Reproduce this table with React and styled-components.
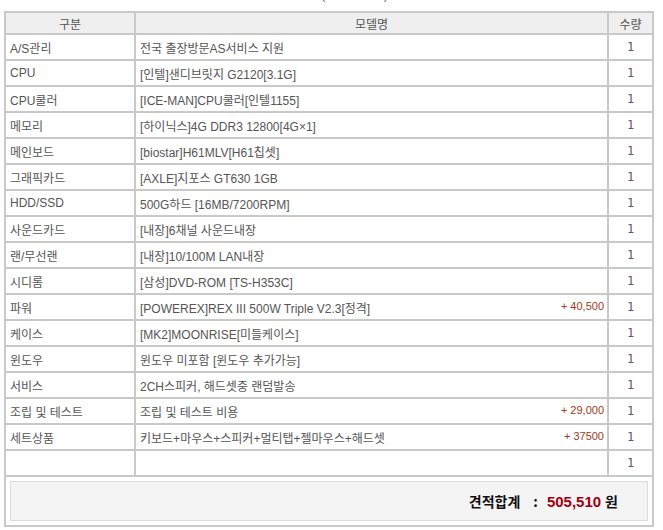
import React from "react";
import styled, { createGlobalStyle } from "styled-components";

const Global = createGlobalStyle`
  html, body { margin: 0; padding: 0; background: #fff; }
  body { font-family: "Liberation Sans", "Noto Sans CJK KR", sans-serif; font-size: 12px; color: #555; }
`;

const Page = styled.div`
  width: 663px;
  height: 530px;
  overflow: hidden;
  padding-left: 4px;
  box-sizing: border-box;
`;

const Caption = styled.div`
  height: 11px;
  width: 650px;
  overflow: hidden;
  display: flex;
  justify-content: center;
  align-items: flex-start;
  line-height: 12px;
  font-size: 12px;
  color: #666;
  & > span { margin-top: -11px; }
`;

const Grid = styled.div`
  display: grid;
  grid-template-columns: 128px 471px 43px;
  gap: 2px;
  padding: 2px;
  background: #c9c9c9;
  width: 650px;
  box-sizing: border-box;
`;

const HeadCell = styled.div`
  background: #efefef;
  height: 20px;
  display: flex;
  align-items: center;
  justify-content: center;
  color: #555;
`;

const Cell = styled.div`
  background: #fff;
  height: 24px;
  display: flex;
  align-items: center;
  justify-content: ${(p) => (p.$center ? "center" : "space-between")};
  padding: ${(p) => (p.$center ? "0" : "0 3px 0 4px")};
  white-space: nowrap;
  color: #555;
`;

const Qty = styled.span`
  color: #6b506b;
  font-family: "DejaVu Sans Mono", monospace;
  font-size: 12px;
`;

const Price = styled.span`
  color: #a33a1a;
  font-size: 11px;
  margin-top: -3px;
`;

const SummaryCell = styled.div`
  grid-column: 1 / -1;
  background: #fff;
  padding: 4px;
  height: 48px;
  box-sizing: border-box;
`;

const SummaryBox = styled.div`
  height: 100%;
  box-sizing: border-box;
  border: 1px solid #dcdcdc;
  background: #f4f4f4;
  display: flex;
  align-items: center;
  justify-content: flex-end;
  padding-right: 29px;
  font-family: "Noto Sans CJK KR", sans-serif;
  font-weight: 700;
  font-size: 14px;
  color: #111;
`;

const Colon = styled.span`
  margin: 0 9px 0 13px;
`;

const Total = styled.span`
  color: #a0000f;
  margin-right: 4px;
  font-family: "Liberation Sans", sans-serif;
  font-size: 15px;
`;

const rows = [
  ["A/S관리", "전국 출장방문AS서비스 지원"],
  ["CPU", "[인텔]샌디브릿지 G2120[3.1G]"],
  ["CPU쿨러", "[ICE-MAN]CPU쿨러[인텔1155]"],
  ["메모리", "[하이닉스]4G DDR3 12800[4G×1]"],
  ["메인보드", "[biostar]H61MLV[H61칩셋]"],
  ["그래픽카드", "[AXLE]지포스 GT630 1GB"],
  ["HDD/SSD", "500G하드 [16MB/7200RPM]"],
  ["사운드카드", "[내장]6채널 사운드내장"],
  ["랜/무선랜", "[내장]10/100M LAN내장"],
  ["시디롬", "[삼성]DVD-ROM [TS-H353C]"],
  ["파워", "[POWEREX]REX III 500W Triple V2.3[정격]", "+ 40,500"],
  ["케이스", "[MK2]MOONRISE[미들케이스]"],
  ["윈도우", "윈도우 미포함 [윈도우 추가가능]"],
  ["서비스", "2CH스피커, 해드셋중 랜덤발송"],
  ["조립 및 테스트", "조립 및 테스트 비용", "+ 29,000"],
  ["세트상품", "키보드+마우스+스피커+멀티탭+젤마우스+해드셋", "+ 37500"],
  ["", ""],
];

export default function App() {
  return (
    <Page>
      <Global />
      <Caption>
        <span>* 견적 내역 (부가세 포함) *</span>
      </Caption>
      <Grid>
        <HeadCell>구분</HeadCell>
        <HeadCell>모델명</HeadCell>
        <HeadCell>수량</HeadCell>
        {rows.map(([cat, model, price], i) => (
          <React.Fragment key={i}>
            <Cell>{cat}</Cell>
            <Cell>
              <span>{model}</span>
              {price && <Price>{price}</Price>}
            </Cell>
            <Cell $center>
              <Qty>1</Qty>
            </Cell>
          </React.Fragment>
        ))}
        <SummaryCell>
          <SummaryBox>
            <span>견적합계</span>
            <Colon>:</Colon>
            <Total>505,510</Total>
            <span>원</span>
          </SummaryBox>
        </SummaryCell>
      </Grid>
    </Page>
  );
}
